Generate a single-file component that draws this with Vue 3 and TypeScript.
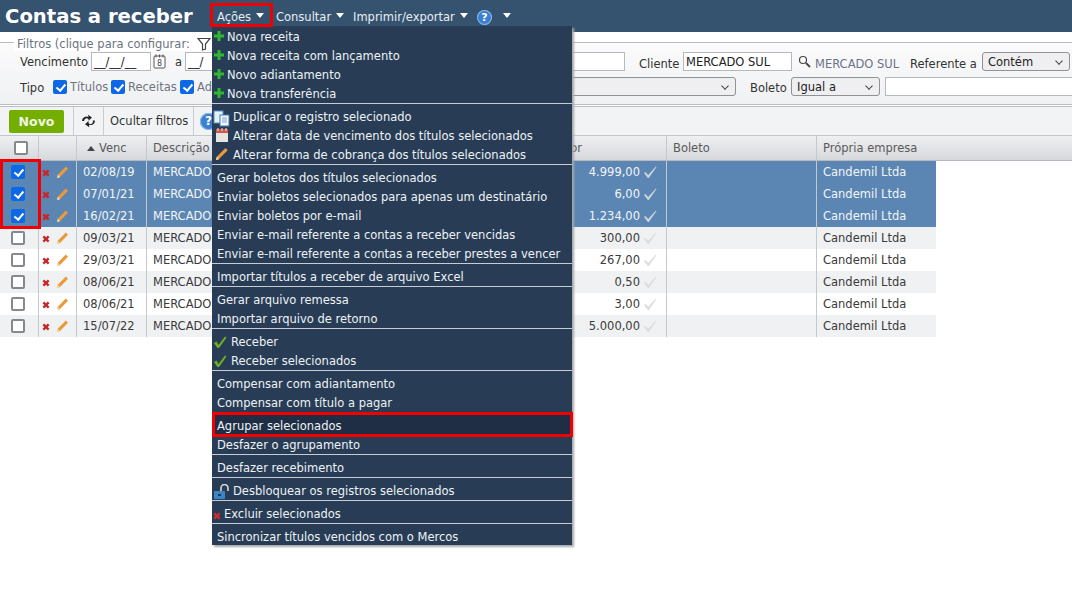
<script setup lang="ts">
type Icon = 'plus' | 'doc' | 'cal' | 'pencil' | 'check' | 'lock' | 'x' | ''
interface Item { label: string; icon: Icon; sep?: boolean; active?: boolean }
const items: Item[] = [
  { label: 'Nova receita', icon: 'plus' },
  { label: 'Nova receita com lançamento', icon: 'plus' },
  { label: 'Novo adiantamento', icon: 'plus' },
  { label: 'Nova transferência', icon: 'plus' },
  { label: 'Duplicar o registro selecionado', icon: 'doc', sep: true },
  { label: 'Alterar data de vencimento dos títulos selecionados', icon: 'cal' },
  { label: 'Alterar forma de cobrança dos títulos selecionados', icon: 'pencil' },
  { label: 'Gerar boletos dos títulos selecionados', icon: '', sep: true },
  { label: 'Enviar boletos selecionados para apenas um destinatário', icon: '' },
  { label: 'Enviar boletos por e-mail', icon: '' },
  { label: 'Enviar e-mail referente a contas a receber vencidas', icon: '' },
  { label: 'Enviar e-mail referente a contas a receber prestes a vencer', icon: '' },
  { label: 'Importar títulos a receber de arquivo Excel', icon: '', sep: true },
  { label: 'Gerar arquivo remessa', icon: '', sep: true },
  { label: 'Importar arquivo de retorno', icon: '' },
  { label: 'Receber', icon: 'check', sep: true },
  { label: 'Receber selecionados', icon: 'check' },
  { label: 'Compensar com adiantamento', icon: '', sep: true },
  { label: 'Compensar com título a pagar', icon: '' },
  { label: 'Agrupar selecionados', icon: '', sep: true, active: true },
  { label: 'Desfazer o agrupamento', icon: '' },
  { label: 'Desfazer recebimento', icon: '', sep: true },
  { label: 'Desbloquear os registros selecionados', icon: 'lock', sep: true },
  { label: 'Excluir selecionados', icon: 'x', sep: true },
  { label: 'Sincronizar títulos vencidos com o Mercos', icon: '', sep: true }
]
interface Row { venc: string; valor: string; sel: boolean }
const rows: Row[] = [
  { venc: '02/08/19', valor: '4.999,00', sel: true },
  { venc: '07/01/21', valor: '6,00', sel: true },
  { venc: '16/02/21', valor: '1.234,00', sel: true },
  { venc: '09/03/21', valor: '300,00', sel: false },
  { venc: '29/03/21', valor: '267,00', sel: false },
  { venc: '08/06/21', valor: '0,50', sel: false },
  { venc: '08/06/21', valor: '3,00', sel: false },
  { venc: '15/07/22', valor: '5.000,00', sel: false }
]
</script>

<template>
  <div class="page">
    <header class="top">
      <h1 class="title">Contas a receber</h1>
      <nav class="nav">
        <span class="nav-item n1">Ações<i class="caret"></i></span>
        <span class="nav-item n2">Consultar<i class="caret"></i></span>
        <span class="nav-item n3">Imprimir/exportar<i class="caret"></i></span>
        <span class="help">?</span>
        <i class="caret c4"></i>
      </nav>
    </header>

    <section class="filters">
      <div class="legend">
        <span>Filtros (clique para configurar:</span>
        <svg class="funnel" width="14" height="14" viewBox="0 0 14 14"><path d="M1 1.500h12L8.500 7v5L5.500 13V7z" fill="#fff" stroke="#444" stroke-width="1.200"/></svg>
      </div>
      <div class="f-row r1">
        <span class="lb l-venc">Vencimento</span>
        <span class="inp w60">__/__/__</span>
        <svg class="calico" width="13" height="15" viewBox="0 0 13 15"><rect x="1" y="2" width="11" height="12" rx="1" fill="#fff" stroke="#555"/><path d="M3 .5v3M6.500 .5v3M10 .5v3" stroke="#555"/><text x="6.500" y="12" font-size="8" text-anchor="middle" fill="#444" font-family="DejaVu Sans">8</text></svg>
        <span class="lb a">a</span>
        <span class="inp w60">__/</span>
        <span class="inp wfill"></span>
        <span class="lb cli">Cliente</span>
        <span class="inp w109">MERCADO SUL</span>
        <svg class="lupa" width="13" height="13" viewBox="0 0 13 13"><circle cx="5" cy="5" r="3.500" fill="#fff" stroke="#444" stroke-width="1.200"/><path d="M8 8l4 4" stroke="#444" stroke-width="1.800"/></svg>
        <span class="cli-name">MERCADO SUL</span>
        <span class="lb ref">Referente a</span>
        <span class="sel w88">Contém<i class="chev"></i></span>
      </div>
      <div class="f-row r2">
        <span class="lb tipo">Tipo</span>
        <label class="tick t1"><i class="cb on"></i>Títulos</label>
        <label class="tick t2"><i class="cb on"></i>Receitas</label>
        <label class="tick t3"><i class="cb on"></i>Ad</label>
        <span class="sel wsel2"><i class="chev"></i></span>
        <span class="lb bol">Boleto</span>
        <span class="sel w89">Igual a<i class="chev"></i></span>
        <span class="inp wrest"></span>
      </div>
    </section>

    <section class="toolbar">
      <button class="novo">Novo</button>
      <span class="tb-cell refresh">
        <svg width="15" height="14" viewBox="0 0 15 14"><path d="M1 7a4.500 4.500 0 0 1 6.500-4L7 .8l4 2.700-3.500 3.200V5A2.500 2.500 0 0 0 3.200 7z" fill="#222"/><path d="M14 6.500a4.500 4.500 0 0 1-6 4.300l.3 2.400-4.300-3 3.500-3.200V9a2.500 2.500 0 0 0 4.300-2.500z" fill="#222"/></svg>
      </span>
      <span class="tb-cell ocultar">Ocultar filtros</span>
      <span class="tb-cell helpcell"><span class="help big">?</span></span>
    </section>

    <section class="grid">
      <div class="thead">
        <div class="row head">
          <div class="c c1"><i class="cb head-cb"></i></div>
          <div class="c c2"></div>
          <div class="c c3"><i class="up"></i>Venc</div>
          <div class="c c4x">Descrição</div>
          <div class="c c5">Valor</div>
          <div class="c c6">Boleto</div>
          <div class="c c7">Própria empresa</div>
        </div>
      </div>
      <div
        v-for="(r, i) in rows"
        :key="i"
        class="row body"
        :class="{ selected: r.sel, alt: !r.sel && i % 2 === 0 }"
      >
        <div class="c c1"><i class="cb" :class="{ on: r.sel }"></i></div>
        <div class="c c2">
          <svg class="xic" width="8" height="8" viewBox="0 0 9 9"><path d="M1.500 1.500l6 6M7.500 1.500l-6 6" stroke="#c62828" stroke-width="2.600"/></svg>
          <svg width="14" height="14" viewBox="0 0 14 14"><path d="M1 13l.8-3.200 8-8.300 2.200 2.200-8 8.300z" fill="#e99a3a"/><path d="M1 13l.8-3.200 2.400 2.400z" fill="#ecd9b5"/></svg>
        </div>
        <div class="c c3 date">{{ r.venc }}</div>
        <div class="c c4x">MERCADO</div>
        <div class="c c5 val">
          <span>{{ r.valor }}</span>
          <svg class="okmark" width="14" height="14" viewBox="0 0 14 14"><path d="M1 8l1.500-1L5.200 10 12.800 1.500 13.500 2 5.800 13H4.800z" :fill="r.sel ? '#cbd3da' : '#dcdcdc'"/></svg>
        </div>
        <div class="c c6"></div>
        <div class="c c7">Candemil Ltda</div>
      </div>
    </section>

    <!-- open dropdown, over the page -->
    <div class="menu">
      <template v-for="it in items" :key="it.label">
        <div v-if="it.sep" class="sep"></div>
        <div class="mi" :class="['ic-' + (it.icon || 'none'), { active: it.active }]">
          <svg v-if="it.icon === 'plus'" class="mic" width="10" height="10" viewBox="0 0 10 10"><path d="M3.500 0h3v3.500H10v3H6.500V10h-3V6.500H0v-3h3.500z" fill="#2fb82f"/></svg>
          <svg v-else-if="it.icon === 'doc'" class="mic" width="17" height="17" viewBox="0 0 17 17"><rect x="1" y="1" width="9" height="12" fill="#e4f0fa" stroke="#5a8fc4"/><rect x="7" y="5" width="9" height="11" fill="#f2f8fd" stroke="#3e78b4"/><path d="M9 8h5M9 10h5M9 12h5" stroke="#7aa5cf"/></svg>
          <svg v-else-if="it.icon === 'cal'" class="mic" width="14" height="15" viewBox="0 0 14 15"><rect x="1" y="1" width="12" height="13" fill="#e8e4e0"/><rect x="1" y="1" width="12" height="4" fill="#d0584a"/><path d="M3 0v3M7 0v3M11 0v3" stroke="#eee"/></svg>
          <svg v-else-if="it.icon === 'pencil'" class="mic" width="14" height="14" viewBox="0 0 14 14"><path d="M1 13l.8-3.200 8.700-8.800 2.200 2.200-8.700 8.800z" fill="#e99a3a"/><path d="M1 13l.8-3.200 2.400 2.400z" fill="#ecd9b5"/></svg>
          <svg v-else-if="it.icon === 'check'" class="mic" width="14" height="14" viewBox="0 0 14 14"><path d="M1 8l2.500-1.500L5.500 10 12 1.500 13.500 2.500 6 13H4.500z" fill="#6fae22"/></svg>
          <svg v-else-if="it.icon === 'lock'" class="mic" width="17" height="16" viewBox="0 0 17 16"><path d="M8 8V4a3.500 3.500 0 0 1 7 0v3" fill="none" stroke="#d8d8d8" stroke-width="1.600"/><rect x="1" y="7" width="11" height="8" rx="1" fill="#3d84c4"/><rect x="5" y="10" width="3" height="2" fill="#173a5c"/></svg>
          <svg v-else-if="it.icon === 'x'" class="mic" width="8" height="8" viewBox="0 0 9 9"><path d="M1.500 1.500l6 6M7.500 1.500l-6 6" stroke="#d02c2c" stroke-width="2.600"/></svg>
          <span>{{ it.label }}</span>
        </div>
      </template>
    </div>

    <!-- red annotation frames -->
    <div class="mark m-acoes"></div>
    <div class="mark m-checks"></div>
    <div class="mark m-agrupar"></div>
  </div>
</template>

<style scoped>
.page { position: relative; width: 1072px; height: 605px; overflow: hidden; background: #fff; font-family: "DejaVu Sans", Verdana, sans-serif; font-size: 11.500px; color: #333; }
.top { height: 32px; background: #35536f; display: flex; align-items: flex-start; }
.title { margin: 5px 0 0 5px; width: 205px; font-size: 19.600px; line-height: 24px; font-weight: 700; color: #fff; white-space: nowrap; }
.nav { display: flex; align-items: center; height: 20px; margin-top: 7px; color: #e8edf2; }
.nav-item { display: flex; align-items: center; white-space: nowrap; }
.n1 { margin-left: 7px; width: 59px; }
.n2 { width: 77px; }
.n3 { width: 124px; }
.caret { display: inline-block; width: 0; height: 0; border: 4.500px solid transparent; border-top: 5px solid #fff; border-bottom: 0; margin-left: 5px; margin-top: -3px; }
.c4 { margin-left: 11px; }
.help { display: inline-block; flex: none; width: 15px; height: 15px; border-radius: 50%; background: #3b7fd0; color: #fff; font-weight: 700; font-size: 11px; line-height: 15px; text-align: center; box-shadow: inset 0 0 0 1px #8ab8ea; }
.big { width: 17px; height: 17px; line-height: 17px; font-size: 12px; }
.filters { height: 75px; padding-top: 10px; box-sizing: border-box; position: relative; background: linear-gradient(#fff 10px, #b9bec4 10px, #b9bec4 11px, #fbfbfc 11px, #f0f1f3 72px, #b9bec4 72px, #b9bec4 73px, #fff 73px, #fff 74px, #b9bec4 74px); }
.legend { position: absolute; left: 14px; top: 5px; display: flex; align-items: center; gap: 7px; background: #fff; padding: 0 3px; color: #6a7480; }
.f-row { display: flex; align-items: center; height: 19px; padding-left: 20px; }
.r1 { margin-top: 10px; }
.r2 { margin-top: 6px; }
.lb { white-space: nowrap; color: #333; flex: none; }
.l-venc { width: 71px; }
.inp, .sel { height: 19px; box-sizing: border-box; background: #fff; border: 1px solid #b5b8bc; padding: 0 2px; line-height: 18px; color: #222; white-space: nowrap; overflow: hidden; flex: none; }
.w60 { width: 60px; }
.calico { margin-left: 2px; flex: none; width: 13px; }
.a { margin-left: 9px; width: 10px; }
.wfill { width: 380px; }
.cli { margin-left: 14px; width: 44px; margin-top: 4px; }
.w109 { width: 109px; }
.lupa { margin-left: 6px; flex: none; }
.cli-name { margin-left: 4px; margin-top: 4px; width: 89px; flex: none; color: #6f7188; white-space: nowrap; }
.ref { width: 72px; margin-left: 6px; margin-top: 4px; }
.sel { position: relative; border-radius: 3px; background: #efeff1; border-color: #8f9296; padding-left: 5px; }
.chev { position: absolute; right: 7px; top: 5px; width: 5px; height: 5px; border: solid #333; border-width: 0 1.500px 1.500px 0; transform: rotate(45deg) scale(.9); }
.w88 { width: 88px; }
.w89 { width: 89px; }
.tipo { width: 33px; margin-top: 2px; }
.tick { display: flex; align-items: center; gap: 3px; color: #6f7480; white-space: nowrap; flex: none; }
.tick .cb { margin-top: 1px; }
.t1 { width: 58px; }
.t2 { width: 69px; }
.t3 { width: 110px; }
.wsel2 { width: 446px; }
.bol { margin-left: 14px; width: 41px; margin-top: 3px; }
.wrest { width: 190px; margin-left: 5px; }
.toolbar { height: 29px; background: #f2f3f5; display: flex; align-items: center; padding-left: 9px; box-sizing: border-box; border-bottom: 1px solid #c4c7cb; }
.novo { width: 55px; height: 23px; border: 0; padding: 0; border-radius: 2px; background: #74ae00; color: #f0f6e0; font: 700 12.500px "DejaVu Sans", sans-serif; }
.tb-cell { height: 28px; box-sizing: border-box; display: flex; align-items: center; border-left: 1px solid #c9ccd0; white-space: nowrap; color: #333; flex: none; }
.refresh { margin-left: 9px; width: 30px; padding-left: 7px; }
.ocultar { width: 90px; padding-left: 6px; }
.helpcell { padding-left: 6px; }
.thead { height: 25px; background: linear-gradient(#eef0f2, #d6d8dc); border-bottom: 1px solid #b5bac0; box-sizing: border-box; }
.row { display: grid; grid-template-columns: 39px 38px 70px 400px 120px 150px 119px; width: 936px; }
.head { height: 24px; color: #5a5a5a; }
.body { height: 22px; background: #f0f1f2; color: #3a3a3a; }
.body.alt { background: #fff; }
.body.selected { background: #5b85b2; color: #f2f5f8; }
.c { border-right: 1px solid #c4c9ce; padding: 0 6px; display: flex; align-items: center; white-space: nowrap; overflow: hidden; box-sizing: border-box; min-width: 0; }
.c1 { padding: 0 0 0 11px; }
.head .c1 { padding-left: 14px; }
.c2 { padding: 0 0 0 3px; gap: 6px; }
.xic { margin-top: 2px; }
.head .c2 { padding: 0; }
.c7 { border-right: 0; }
.val { justify-content: flex-end; padding: 0 9px 0 0; gap: 3px; }
.up { width: 0; height: 0; border: 4px solid transparent; border-bottom: 5px solid #444; border-top: 0; margin: 0 4px 0 4px; }
.cb { display: block; position: relative; box-sizing: border-box; width: 14px; height: 14px; border-radius: 2px; border: 2px solid #85888f; background: #fff; flex: none; }
.cb.on { background: #0d68e6; border-color: #0d68e6; }
.cb.on::after { content: ""; position: absolute; left: 3px; top: 0; width: 3.500px; height: 7px; border: solid #fff; border-width: 0 2px 2px 0; transform: rotate(40deg); }
.menu { position: absolute; left: 212px; top: 26px; width: 360px; height: 519px; box-sizing: border-box; padding-top: 1px; background: #283d55; box-shadow: 2px 2px 2px #a4a8ac; color: #eef2f6; }
.mi { position: relative; height: 19px; line-height: 20px; padding-left: 5px; white-space: nowrap; }
.sep { height: 4px; box-sizing: border-box; border-top: 1px solid #c6ccd2; }
.mic { position: absolute; left: 1px; top: 3px; }
.ic-plus .mic { left: 2px; top: 4px; }
.ic-cal .mic, .ic-pencil .mic { left: 3px; top: 2px; }
.ic-plus { padding-left: 15px; }
.ic-doc, .ic-cal, .ic-pencil, .ic-lock { padding-left: 21px; }
.ic-check { padding-left: 19px; }
.ic-x { padding-left: 12px; }
.ic-x .mic { top: 8px; }
.active { background: #1f2e44; box-shadow: 0 -3px 0 #1f2e44; }
.mark { position: absolute; box-sizing: border-box; border: 3px solid #f00000; pointer-events: none; }
.m-acoes { left: 210px; top: 3px; width: 63px; height: 24px; }
.m-checks { left: 0; top: 159px; width: 41px; height: 70px; }
.m-agrupar { left: 212px; top: 412px; width: 361px; height: 25px; }
</style>
